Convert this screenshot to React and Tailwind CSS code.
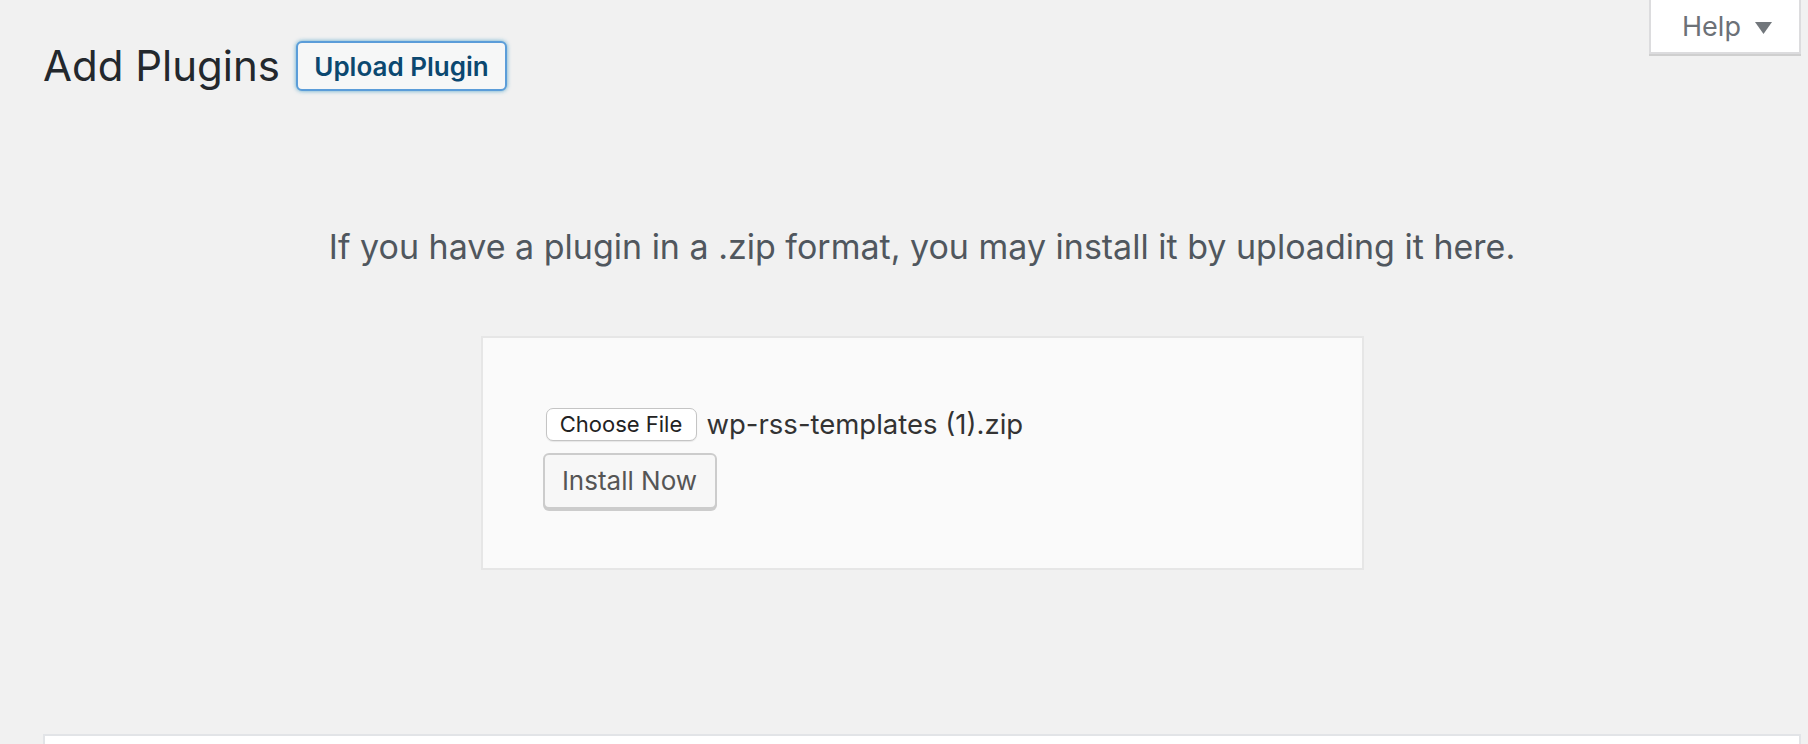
import React from 'react'

const FONT = { fontFamily: 'Inter, "Noto Sans", "Liberation Sans", sans-serif' }

function HelpTab() {
  return (
    <button
      type="button"
      className="float-right flex h-[54px] w-[152px] items-center justify-center gap-[14px] border-x-2 border-b-2 border-[#dcdcde] bg-white pt-[3px] pl-[4px] text-[27px] text-[#6c7177] shadow-[0_2px_0_#cfcfcf]"
    >
      <span>Help</span>
      <svg width="17" height="12" viewBox="0 0 17 12">
        <path d="M0 0h17L8.5 12z" fill="#72777c" />
      </svg>
    </button>
  )
}

export default function App() {
  return (
    <div className="min-h-screen overflow-hidden bg-[#f1f1f1] pl-[43px] pr-[7px]" style={FONT}>
      <HelpTab />

      <div className="flex items-center gap-[16px] pt-[41px]">
        <h1 className="text-[42px] font-normal leading-[50px] text-[#23282d]">Add Plugins</h1>
        <button
          type="button"
          className="h-[50px] w-[211px] rounded-[6px] border-2 border-[#5b9dd9] bg-[#f6f7f7] text-[26px] font-semibold text-[#0b4870] shadow-[0_0_4px_rgba(30,140,190,0.7)]"
        >
          Upload Plugin
        </button>
      </div>

      <p className="mt-[134px] text-center text-[34px] leading-[44px] text-[#50575e]">
        If you have a plugin in a .zip format, you may install it by uploading it here.
      </p>

      <form
        className="mx-auto mt-[67px] h-[234px] w-[883px] border-2 border-[#e6e6e6] bg-[#fafafa] pl-[60px] pt-[70px]"
        onSubmit={(e) => e.preventDefault()}
      >
        <div className="flex items-center gap-[10px] pl-[3px]">
          <span className="flex h-[33px] w-[151px] items-center justify-center rounded-[7px] border border-[#c4c4c4] bg-white text-[22px] text-[#222] shadow-[0_1px_1px_rgba(0,0,0,0.08)]">
            Choose File
          </span>
          <span className="text-[27.5px] leading-[33px] text-[#333]">wp-rss-templates (1).zip</span>
        </div>
        <button
          type="submit"
          className="mt-[12px] h-[56px] w-[174px] rounded-[6px] border-2 border-[#cccccc] bg-[#f7f7f7] pb-[2px] text-[26px] text-[#555] shadow-[0_2px_0_#cccccc]"
        >
          Install Now
        </button>
      </form>

      <div className="mt-[164px] h-[40px] border-2 border-[#e2e4e7] bg-white" />
    </div>
  )
}
